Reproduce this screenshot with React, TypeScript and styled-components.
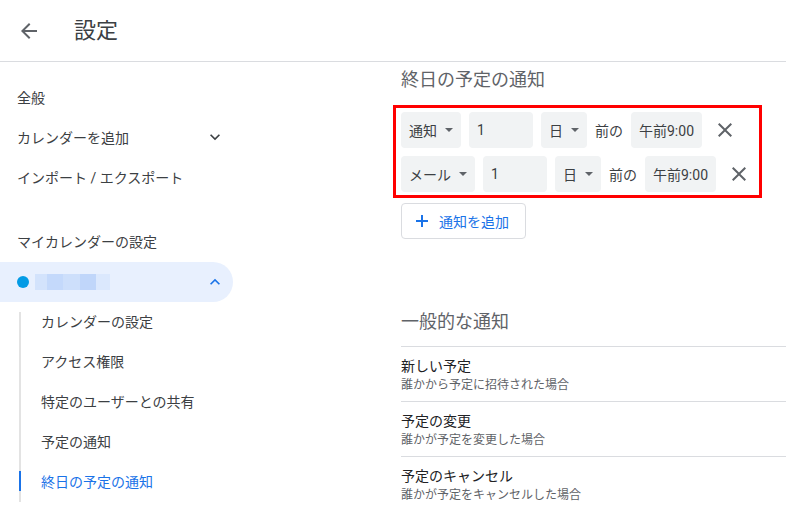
import styled, { createGlobalStyle } from 'styled-components';

const GlobalStyle = createGlobalStyle`
    html, body {
        margin: 0;
        padding: 0;
        background: #fff;
    }
    body {
        font-family: Roboto, 'Noto Sans CJK JP', sans-serif;
        color: #3c4043;
        overflow: hidden;
    }
`;

const BackIcon = () => (
    <svg width='24' height='24' viewBox='0 0 24 24' fill='#5f6368'>
        <path d='M20 11H7.83l5.59-5.59L12 4l-8 8 8 8 1.41-1.41L7.83 13H20v-2z' />
    </svg>
);

const Chevron = ({ up, color }: { up?: boolean; color: string }) => (
    <svg width='20' height='20' viewBox='0 0 24 24' fill={color}>
        {up ? (
            <path d='M12 8l-6 6 1.41 1.41L12 10.83l4.59 4.58L18 14z' />
        ) : (
            <path d='M16.59 8.59L12 13.17 7.41 8.59 6 10l6 6 6-6z' />
        )}
    </svg>
);

const CloseIcon = () => (
    <svg width='24' height='24' viewBox='0 0 24 24' fill='#5f6368'>
        <path d='M19 6.41L17.59 5 12 10.59 6.41 5 5 6.41 10.59 12 5 17.59 6.41 19 12 13.41 17.59 19 19 17.59 13.41 12z' />
    </svg>
);

const PlusIcon = () => (
    <svg width='18' height='18' viewBox='0 0 18 18' fill='#1a73e8'>
        <rect x='3' y='8' width='12' height='2' />
        <rect x='8' y='3' width='2' height='12' />
    </svg>
);

const rules = [
    { method: '通知', amount: '1', unit: '日', time: '午前9:00' },
    { method: 'メール', amount: '1', unit: '日', time: '午前9:00' },
];

const general = [
    { title: '新しい予定', desc: '誰かから予定に招待された場合' },
    { title: '予定の変更', desc: '誰かが予定を変更した場合' },
    { title: '予定のキャンセル', desc: '誰かが予定をキャンセルした場合' },
];

const subItems = [
    'カレンダーの設定',
    'アクセス権限',
    '特定のユーザーとの共有',
    '予定の通知',
    '終日の予定の通知',
];

const App = () => {
    return (
        <Page>
            <GlobalStyle />
            <Header>
                <IconButton>
                    <BackIcon />
                </IconButton>
                <Title>設定</Title>
            </Header>
            <Body>
                <Sidebar>
                    <NavItem>全般</NavItem>
                    <NavItem>
                        カレンダーを追加
                        <Chevron color='#3c4043' />
                    </NavItem>
                    <NavItem>インポート / エクスポート</NavItem>
                    <NavSection>マイカレンダーの設定</NavSection>
                    <CalendarPill>
                        <Dot />
                        <BlurredName />
                        <PillSpacer />
                        <Chevron up color='#1a73e8' />
                    </CalendarPill>
                    <SubList>
                        {subItems.map((item, i) => (
                            <SubItem key={item} active={i === subItems.length - 1}>
                                {item}
                            </SubItem>
                        ))}
                    </SubList>
                </Sidebar>
                <Main>
                    <SectionTitle>終日の予定の通知</SectionTitle>
                    <Highlight>
                        {rules.map((rule) => (
                            <Row key={rule.method}>
                                <Select>
                                    {rule.method}
                                    <Caret />
                                </Select>
                                <NumberField>{rule.amount}</NumberField>
                                <Select>
                                    {rule.unit}
                                    <Caret />
                                </Select>
                                <Label>前の</Label>
                                <TimeField>{rule.time}</TimeField>
                                <RemoveButton>
                                    <CloseIcon />
                                </RemoveButton>
                            </Row>
                        ))}
                    </Highlight>
                    <AddButton>
                        <PlusIcon />
                        通知を追加
                    </AddButton>
                    <SectionTitle spaced>一般的な通知</SectionTitle>
                    <List>
                        {general.map((g) => (
                            <ListItem key={g.title}>
                                <ItemTitle>{g.title}</ItemTitle>
                                <ItemDesc>{g.desc}</ItemDesc>
                            </ListItem>
                        ))}
                    </List>
                </Main>
            </Body>
        </Page>
    );
};

const Page = styled.div`
    width: 786px;
    height: 509px;
    overflow: hidden;
    display: flex;
    flex-direction: column;
`;

const Header = styled.header`
    height: 61px;
    flex-shrink: 0;
    display: flex;
    align-items: center;
    padding: 0 5px;
    border-bottom: 1px solid #dadce0;
`;

const IconButton = styled.div`
    width: 48px;
    height: 48px;
    display: flex;
    align-items: center;
    justify-content: center;
`;

const Title = styled.h1`
    margin: 0 0 0 21px;
    font-size: 22px;
    font-weight: 400;
    color: #3c4043;
    line-height: 28px;
`;

const Body = styled.div`
    display: flex;
    flex: 1;
    min-height: 0;
`;

const Sidebar = styled.nav`
    width: 241px;
    flex-shrink: 0;
    padding-top: 15px;
    display: flex;
    flex-direction: column;
`;

const NavItem = styled.div`
    height: 40px;
    display: flex;
    align-items: center;
    justify-content: space-between;
    padding: 0 16px 0 17px;
    font-size: 14px;
    color: #3c4043;
`;

const NavSection = styled(NavItem)`
    margin-top: 24px;
`;

const CalendarPill = styled.div`
    height: 40px;
    margin: 1px 8px 0 0;
    padding: 0 8px 0 17px;
    display: flex;
    align-items: center;
    background: #e8f0fe;
    border-radius: 0 20px 20px 0;
`;

const Dot = styled.span`
    width: 12px;
    height: 12px;
    border-radius: 50%;
    background: #039be5;
    margin-right: 6px;
`;

const BlurredName = styled.span`
    width: 75px;
    height: 16px;
    background: linear-gradient(
        90deg,
        #d3e3fc 0 16%,
        #c4d9fb 16% 37%,
        #cddffb 37% 60%,
        #c0d6fa 60% 81%,
        #dbe8fd 81% 100%
    );
`;

const PillSpacer = styled.span`
    flex: 1;
`;

const SubList = styled.div`
    position: relative;
    &::before {
        content: '';
        position: absolute;
        left: 19px;
        top: 10px;
        bottom: 0;
        width: 2px;
        background: #e3e3e3;
    }
`;

const SubItem = styled.div<{ active?: boolean }>`
    position: relative;
    height: 40px;
    box-sizing: border-box;
    padding: 0 0 3px 41px;
    display: flex;
    align-items: center;
    font-size: 14px;
    color: ${(p) => (p.active ? '#1a73e8' : '#3c4043')};
    &::before {
        content: '';
        display: ${(p) => (p.active ? 'block' : 'none')};
        position: absolute;
        left: 19px;
        top: 9px;
        width: 2px;
        height: 20px;
        background: #1a73e8;
    }
`;

const Main = styled.main`
    flex: 1;
    padding: 6px 0 0 160px;
    display: flex;
    flex-direction: column;
    align-items: flex-start;
    & > * {
        flex-shrink: 0;
    }
`;

const SectionTitle = styled.h2<{ spaced?: boolean }>`
    margin: ${(p) => (p.spaced ? '71px 0 12px' : '0 0 13px')};
    font-size: 18px;
    font-weight: 400;
    line-height: 24px;
    color: #5f6368;
`;

const Highlight = styled.div`
    box-sizing: border-box;
    width: 369px;
    margin-left: -8px;
    border: 3px solid #ff0000;
    padding: 4px 0 3px 5px;
    display: flex;
    flex-direction: column;
    gap: 8px;
`;

const Row = styled.div`
    display: flex;
    align-items: center;
    gap: 8px;
    height: 36px;
`;

const Field = styled.div`
    height: 36px;
    display: flex;
    align-items: center;
    background: #f1f3f4;
    border-radius: 4px;
    font-size: 14px;
    color: #3c4043;
`;

const Select = styled(Field)`
    padding: 0 8px;
`;

const Caret = styled.span`
    margin-left: 8px;
    width: 0;
    height: 0;
    border-left: 4px solid transparent;
    border-right: 4px solid transparent;
    border-top: 4px solid #5f6368;
`;

const NumberField = styled(Field)`
    width: 64px;
    padding-left: 8px;
    box-sizing: border-box;
`;

const TimeField = styled(Field)`
    padding: 0 8px;
`;

const Label = styled.span`
    font-size: 14px;
    color: #3c4043;
`;

const RemoveButton = styled.div`
    margin-left: 3px;
    width: 24px;
    height: 24px;
    display: flex;
    align-items: center;
    justify-content: center;
`;

const AddButton = styled.div`
    margin-top: 5px;
    height: 36px;
    box-sizing: border-box;
    display: flex;
    align-items: center;
    gap: 8px;
    padding: 0 16px 0 11px;
    border: 1px solid #dadce0;
    border-radius: 4px;
    font-size: 14px;
    color: #1a73e8;
`;

const List = styled.div`
    align-self: stretch;
    border-top: 1px solid #dadce0;
`;

const ListItem = styled.div`
    padding: 9px 0 8px;
    border-bottom: 1px solid #dadce0;
`;

const ItemTitle = styled.div`
    font-size: 14px;
    line-height: 20px;
    color: #202124;
`;

const ItemDesc = styled.div`
    margin-top: 1px;
    font-size: 12px;
    line-height: 16px;
    color: #5f6368;
`;

export default App;
